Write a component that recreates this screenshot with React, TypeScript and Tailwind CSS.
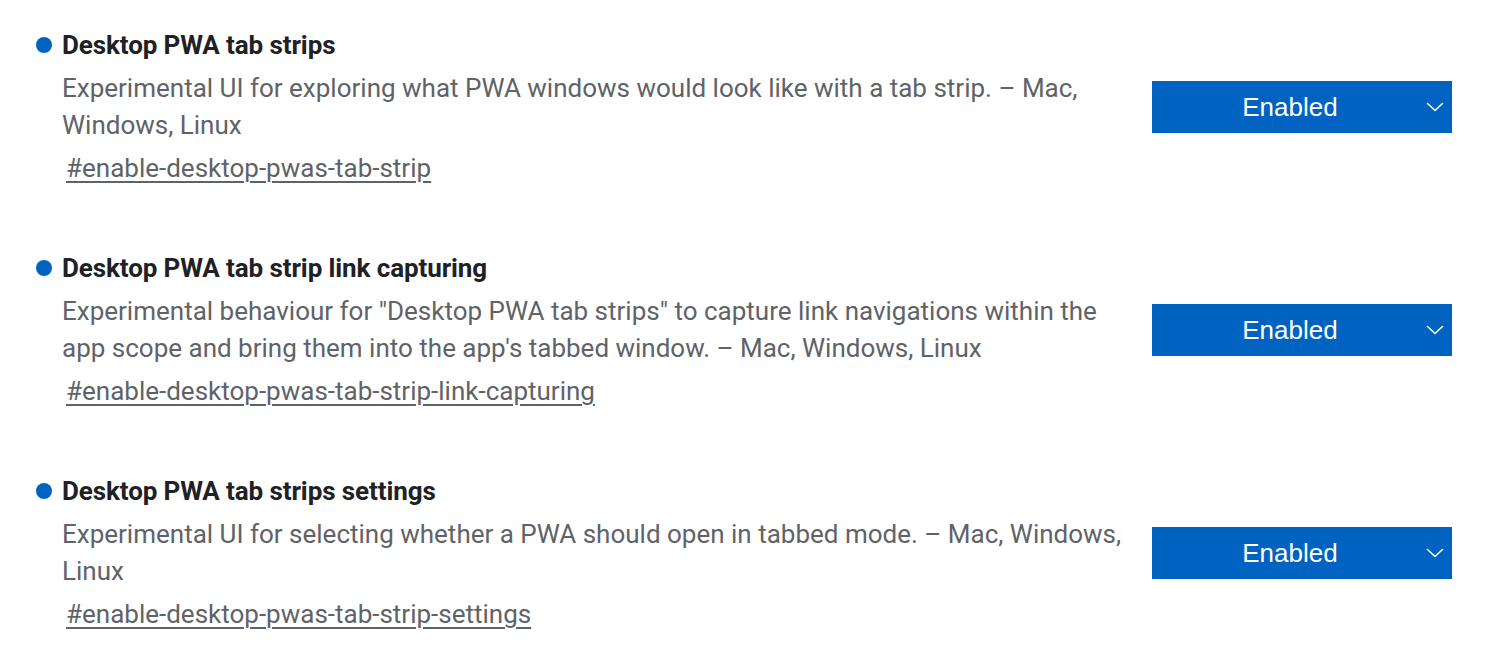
import React from "react";

type Flag = { title: string; desc: string; link: string };

const flags: Flag[] = [
  {
    title: "Desktop PWA tab strips",
    desc: "Experimental UI for exploring what PWA windows would look like with a tab strip. – Mac, Windows, Linux",
    link: "#enable-desktop-pwas-tab-strip",
  },
  {
    title: "Desktop PWA tab strip link capturing",
    desc: 'Experimental behaviour for "Desktop PWA tab strips" to capture link navigations within the app scope and bring them into the app\'s tabbed window. – Mac, Windows, Linux',
    link: "#enable-desktop-pwas-tab-strip-link-capturing",
  },
  {
    title: "Desktop PWA tab strips settings",
    desc: "Experimental UI for selecting whether a PWA should open in tabbed mode. – Mac, Windows, Linux",
    link: "#enable-desktop-pwas-tab-strip-settings",
  },
];

function Chevron() {
  return (
    <svg width="18" height="10" viewBox="0 0 18 10" fill="none" className="block">
      <path d="M1.5 1.5 L9 8.5 L16.5 1.5" stroke="white" strokeWidth="1.6" strokeLinecap="round" strokeLinejoin="round" />
    </svg>
  );
}

function FlagItem({ f }: { f: Flag }) {
  return (
    <div className="flex flex-col">
      <div className="flex items-center h-[32px]">
        <span className="w-4 h-4 rounded-full bg-[#0063c1] ml-[36px] mr-[10px] shrink-0" />
        <h2 className="text-[26px] font-bold text-[#202124] leading-[32px] tracking-[-0.1px]">{f.title}</h2>
      </div>
      <div className="flex items-center mt-[8.5px]">
        <div className="w-[1152px] pl-[62px] pr-[14px] shrink-0">
          <p className="text-[26px] leading-[37px] text-[#5f6368]">{f.desc}</p>
        </div>
        <div className="w-[300px] h-[52px] bg-[#0063c1] flex items-center relative shrink-0">
          <span className="flex-1 text-center pr-[24px] pt-[2px] text-white text-[26px] font-['Liberation_Sans',Arial,sans-serif]">
            Enabled
          </span>
          <span className="absolute right-[8px] top-[21px]">
            <Chevron />
          </span>
        </div>
      </div>
      <div className="pl-[66px] mt-[8.5px]">
        <a className="text-[26px] leading-[32px] text-[#5f6368] underline underline-offset-[4px] decoration-[1.5px]">{f.link}</a>
      </div>
    </div>
  );
}

export default function App() {
  return (
    <div className="w-[1486px] h-[648px] bg-white overflow-hidden font-['Roboto',sans-serif] pt-[29px] flex flex-col gap-[68px]">
      {flags.map((f) => (
        <FlagItem key={f.link} f={f} />
      ))}
    </div>
  );
}
